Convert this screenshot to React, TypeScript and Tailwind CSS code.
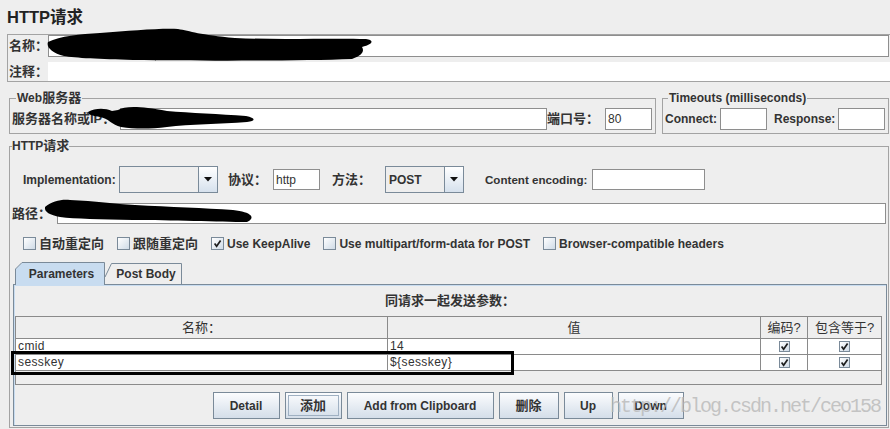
import React from "react";

function Box({ checked, small }: { checked?: boolean; small?: boolean }) {
  return (
    <span
      className={
        small
          ? "flex h-[11px] w-[11px] shrink-0 items-center justify-center border border-[#7a8a99] bg-linear-to-br from-white to-[#cfdbe7]"
          : "flex h-[13px] w-[13px] shrink-0 items-center justify-center border border-[#7a8a99] bg-linear-to-br from-white to-[#cfdbe7]"
      }
    >
      {checked && (
        <svg width="9" height="9" viewBox="0 0 9 9">
          <path d="M1.6 4.6 L3.6 7.2 L7.6 1.6" fill="none" stroke="#1e1e1e" strokeWidth="1.7" />
        </svg>
      )}
    </span>
  );
}

function Combo({ className, text }: { className: string; text?: string }) {
  return (
    <div className={"flex h-[27px] shrink-0 border border-[#7a8a99] bg-[#eeeeee] " + className}>
      <div className="flex flex-1 items-center pl-[3px] text-[12px] font-bold">{text}</div>
      <div className="flex w-[19px] items-center justify-center border-l border-[#7a8a99] bg-linear-to-b from-white to-[#d6e1ed]">
        <svg width="8" height="5" viewBox="0 0 8 5">
          <path d="M0 0 H8 L4 4.5 Z" fill="#111" />
        </svg>
      </div>
    </div>
  );
}

function Btn({ className, children, focus }: { className: string; children: React.ReactNode; focus?: boolean }) {
  return (
    <div
      className={
        "flex h-[27px] shrink-0 border border-[#7a8a99] bg-linear-to-b from-[#fbfcfe] to-[#d4dee9] p-[2px] font-bold text-[#333] " +
        className
      }
    >
      <div
        className={
          focus
            ? "flex flex-1 items-center justify-center border border-[#9fb0c2]"
            : "flex flex-1 items-center justify-center"
        }
      >
        {children}
      </div>
    </div>
  );
}

const cols = "grid grid-cols-[372px_373px_47px_73px]";

export default function App() {
  return (
    <div className="relative h-[429px] w-[890px] overflow-hidden bg-[#eeeeee] font-['Liberation_Sans','Noto_Sans_CJK_SC',sans-serif] text-[#333]">
      {/* title */}
      <div className="h-[34px] pl-[7px] pt-[7px] text-[16.5px] font-bold leading-[20px] text-[#222]">HTTP请求</div>

      {/* name / comment */}
      <div className="ml-[7px] flex h-[48px] flex-col border-y border-l border-[#a3a3a3]">
        <div className="flex h-[22px] items-center">
          <span className="w-[40px] shrink-0 whitespace-nowrap pl-[1px] text-[13px] font-bold">名称：</span>
          <div className="mr-[1px] h-[22px] flex-1 border border-[#8e8e8e] bg-white" />
        </div>
        <div className="mt-[5px] flex h-[19px] items-center">
          <span className="w-[40px] shrink-0 whitespace-nowrap pl-[1px] text-[13px] font-bold">注释：</span>
          <div className="h-[19px] flex-1 bg-white" />
        </div>
      </div>

      {/* web server + timeouts */}
      <div className="mt-[9px] flex gap-[6px] pl-[9px] pr-[1px]">
        <fieldset className="w-[647px] shrink-0 border border-[#a3a3a3] px-[2px] pb-[3px]">
          <legend className="ml-[4px] px-[1px] text-[12px] font-bold leading-[14px]">
            Web<span className="text-[13px]">服务器</span>
          </legend>
          <div className="mt-[3px] flex h-[22px] items-center">
            <span className="w-[108px] shrink-0 whitespace-nowrap text-[13px] font-bold">服务器名称或IP：</span>
            <div className="h-[22px] w-[427px] shrink-0 border border-[#8e8e8e] bg-white" />
            <span className="w-[58px] shrink-0 whitespace-nowrap text-[13px] font-bold">端口号：</span>
            <div className="flex h-[22px] w-[47px] shrink-0 items-center border border-[#8e8e8e] bg-white pl-[2px] text-[12px]">80</div>
          </div>
        </fieldset>
        <fieldset className="flex-1 border border-[#a3a3a3] px-[2px] pb-[3px]">
          <legend className="ml-[3px] px-[1px] text-[12px] font-bold leading-[14px]">Timeouts (milliseconds)</legend>
          <div className="mt-[3px] flex h-[22px] items-center text-[12px] font-bold">
            <span className="w-[55px] shrink-0">Connect:</span>
            <div className="h-[22px] w-[47px] shrink-0 border border-[#8e8e8e] bg-white" />
            <span className="ml-[7px] w-[64px] shrink-0">Response:</span>
            <div className="h-[22px] w-[47px] shrink-0 border border-[#8e8e8e] bg-white" />
          </div>
        </fieldset>
      </div>

      {/* HTTP request */}
      <fieldset className="ml-[9px] mr-[1px] mt-[5px] border border-[#a3a3a3] px-[2px] pb-[1px]">
        <legend className="text-[13px] font-bold leading-[14px]">
          <span className="text-[12px]">HTTP</span>请求
        </legend>

        <div className="mt-[13px] flex h-[27px] items-center pl-[11px]">
          <span className="w-[96px] shrink-0 text-[12px] font-bold">Implementation:</span>
          <Combo className="w-[99px]" />
          <span className="ml-[10px] w-[45px] shrink-0 text-[13px] font-bold">协议：</span>
          <div className="flex h-[21px] w-[47px] shrink-0 items-center border border-[#8e8e8e] bg-white pl-[2px] text-[12px]">http</div>
          <span className="ml-[12px] w-[53px] shrink-0 text-[13px] font-bold">方法：</span>
          <Combo className="w-[79px]" text="POST" />
          <span className="ml-[21px] w-[107px] shrink-0 whitespace-nowrap text-[11.6px] font-bold">Content encoding:</span>
          <div className="h-[21px] w-[113px] shrink-0 border border-[#8e8e8e] bg-white" />
        </div>

        <div className="mt-[10px] flex h-[21px] items-center">
          <span className="w-[45px] shrink-0 text-[13px] font-bold">路径：</span>
          <div className="h-[21px] flex-1 border border-[#8e8e8e] bg-white" />
        </div>

        <div className="mt-[11px] flex h-[17px] items-center gap-[13px] pl-[11px]">
          <label className="flex items-center gap-[3px] text-[13px] font-bold">
            <Box />自动重定向
          </label>
          <label className="flex items-center gap-[3px] text-[13px] font-bold">
            <Box />跟随重定向
          </label>
          <label className="flex items-center gap-[3px] text-[12px] font-bold">
            <Box checked />Use KeepAlive
          </label>
          <label className="flex items-center gap-[3px] text-[12px] font-bold">
            <Box />Use multipart/form-data for POST
          </label>
          <label className="flex items-center gap-[3px] text-[12px] font-bold">
            <Box />Browser-compatible headers
          </label>
        </div>

        {/* tabs */}
        <div className="mt-[10px] flex items-end pl-[3px]">
          <div className="relative z-10 -mb-px flex h-[23px] w-[90px] items-center justify-center pl-[3px] text-[12px] font-bold">
            <svg className="absolute inset-0" width="90" height="23" viewBox="0 0 90 23">
              <path d="M0.5 23 V7 L7 0.5 H89.5 V23" fill="#c8dcf0" stroke="#7a8a99" />
            </svg>
            <span className="relative">Parameters</span>
          </div>
          <div className="relative flex h-[21px] w-[77px] items-center justify-center pl-[5px] text-[12px] font-bold">
            <svg className="absolute inset-0" width="77" height="21" viewBox="0 0 77 21">
              <path d="M0 14 L6.5 0.5 H76.5 V21" fill="#eeeeee" stroke="#7a8a99" />
            </svg>
            <span className="relative">Post Body</span>
          </div>
        </div>

        <div className="-mr-px ml-px flex flex-col border border-[#7a8a99] pb-[6px] shadow-[inset_1px_1px_0_#c8dcf0]">
          <div className="flex h-[31px] items-center justify-center text-[13px] font-bold">同请求一起发送参数：</div>

          <div className="ml-px flex h-[69px] w-[867px] flex-col border border-[#8a8a8a] bg-[#eeeeee]">
            <div className={cols + " h-[22px] border-b border-[#8a8a8a] text-[13px]"}>
              <div className="flex items-center justify-center border-r border-[#8a8a8a]">名称：</div>
              <div className="flex items-center justify-center border-r border-[#8a8a8a]">值</div>
              <div className="flex items-center justify-center border-r border-[#8a8a8a]">编码?</div>
              <div className="flex items-center justify-center">包含等于?</div>
            </div>
            {[
              ["cmid", "14"],
              ["sesskey", "${sesskey}"],
            ].map(([k, v]) => (
              <div key={k} className={cols + " h-[16px] border-b border-[#8a8a8a] bg-white text-[12px] leading-[15px]"}>
                <div className="border-r border-[#8a8a8a] pl-[2px] tracking-[0.4px]">{k}</div>
                <div className="border-r border-[#8a8a8a] pl-[2px] tracking-[0.4px]">{v}</div>
                <div className="flex items-center justify-center border-r border-[#8a8a8a]">
                  <Box checked small />
                </div>
                <div className="flex items-center justify-center">
                  <Box checked small />
                </div>
              </div>
            ))}
          </div>

          <div className="mt-[7px] flex justify-center gap-[5px] pr-[4px]">
            <Btn className="w-[67px] text-[12px]">Detail</Btn>
            <Btn className="w-[57px] text-[13px]" focus>
              添加
            </Btn>
            <Btn className="w-[147px] text-[12px]">Add from Clipboard</Btn>
            <Btn className="w-[60px] text-[13px]">删除</Btn>
            <Btn className="w-[49px] text-[12px]">Up</Btn>
            <Btn className="w-[66px] text-[12px]">Down</Btn>
          </div>
        </div>
      </fieldset>

      {/* highlight box around the sesskey row */}
      <div className="absolute left-[11px] top-[351px] h-[24px] w-[503px] border-[3px] border-black" />

      {/* redaction scribbles */}
      <svg className="pointer-events-none absolute left-0 top-0" width="890" height="429" viewBox="0 0 890 429">
        <path
          d="M48 42 C60 36 80 34 100 33 C130 31 160 28 178 29 C190 31 200 35 235 38 C280 40 330 38 366 39 C374 40 374 44 362 47 C364 50 364 55 352 59 C300 61 200 61 133 60 C100 59 75 58 64 56 C52 53 46 47 48 42 Z"
          fill="#000"
        />
        <path
          d="M88 112 C95 108 105 108 112 111 L118 110 C125 106 140 106 167 111 C190 113 220 114 246 116 C256 118 256 121 247 122 C220 124 190 124 167 127 C150 129 135 129 121 127 C112 125 108 118 100 117 C94 116 88 115 88 112 Z"
          fill="#000"
        />
        <path
          d="M45 207 C52 201 62 199 70 200 C95 201 115 204 135 205 C170 207 205 208 233 210 C252 212 256 218 247 222 C220 222 170 220 133 220 C100 219 75 219 60 217 C50 215 44 212 45 207 Z"
          fill="#000"
        />
      </svg>

      {/* watermark */}
      <div className="pointer-events-none absolute left-[610px] top-[395px] font-['Liberation_Mono',monospace] text-[20px] leading-[24px] tracking-[-2px] text-[#b8b8b8]/80">
        http://blog.csdn.net/ceo158
      </div>
    </div>
  );
}
